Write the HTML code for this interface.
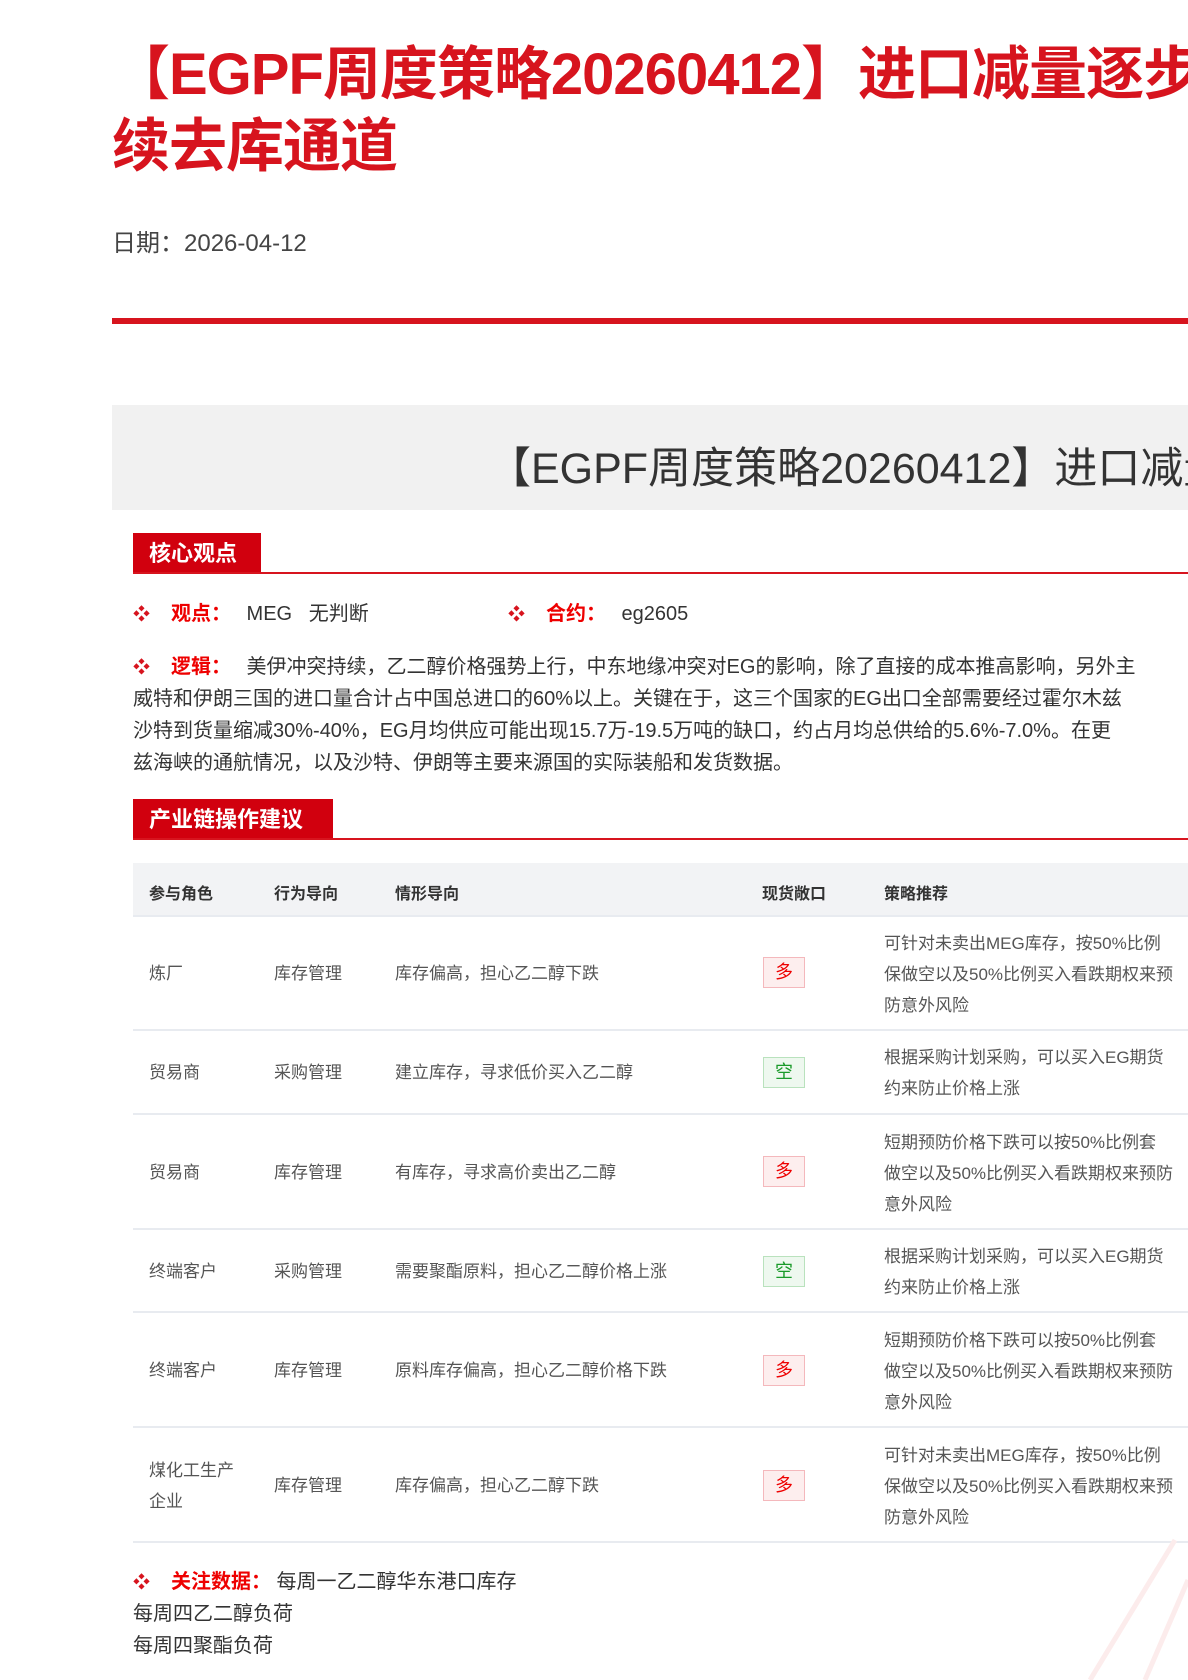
<!DOCTYPE html>
<html><head><meta charset="utf-8"><style>
*{margin:0;padding:0;box-sizing:border-box}
html,body{width:1188px;height:1680px;overflow:hidden;background:#fff}
body{position:relative;font-family:"Liberation Sans","Noto Sans CJK SC",sans-serif;color:#333}
.a{position:absolute;white-space:nowrap}
.wrap{position:absolute;left:0;top:0;width:1188px;height:1680px;overflow:hidden}
.t{font-size:58px;font-weight:bold;color:#d7141e;line-height:70px;letter-spacing:-1px}
.tag{position:absolute;background:#d1000e;color:#fff;font-size:22px;font-weight:bold;line-height:41px;padding-left:16px}
.hl{position:absolute;left:133px;right:0;height:2px;background:#d7141e}
.b{color:#d7141e;font-size:17px;display:inline-block;width:38px}
.lab{color:#e00;font-weight:bold;display:inline-block;width:70px}
.p{font-size:20px;line-height:32px}
.th{font-size:16px;font-weight:bold;color:#333}
.td{font-size:17px;color:#555;line-height:31px}
.rl{position:absolute;left:133px;right:0;height:2px;background:#e8ebf0}
.dd{position:absolute;left:763px;width:42px;height:31px;border:1px solid #f4b8bc;background:#fdeeee;color:#e00;font-size:18px;text-align:center;line-height:29px}
.kk{border-color:#b9e2bd;background:#eef8ef;color:#1a9a2a}
</style></head><body><div class="wrap">
<div class="a t" style="left:112px;top:40px">【EGPF周度策略20260412】进口减量逐步兑现</div>
<div class="a t" style="left:112px;top:112px">续去库通道</div>
<div class="a" style="left:112px;top:223px;font-size:24px;color:#444">日期：2026-04-12</div>
<div class="a" style="left:112px;top:318px;width:1076px;height:6px;background:#d7141e"></div>
<div class="a" style="left:112px;top:405px;width:1076px;height:105px;background:#f1f1f1"></div>
<div class="a" style="left:488px;top:434px;font-size:43px;color:#333">【EGPF周度策略20260412】进口减量逐步</div>

<div class="tag" style="left:133px;top:533px;width:128px">核心观点</div>
<div class="hl" style="top:572px"></div>
<div class="a p" style="left:133px;top:598px"><span class="b">❖</span><span class="lab">观点：</span>&nbsp;MEG&nbsp;&nbsp;&nbsp;无判断</div>
<div class="a p" style="left:508px;top:598px"><span class="b">❖</span><span class="lab">合约：</span>&nbsp;eg2605</div>
<div class="a p" style="left:133px;top:651px"><span class="b">❖</span><span class="lab">逻辑：</span>&nbsp;美伊冲突持续，乙二醇价格强势上行，中东地缘冲突对EG的影响，除了直接的成本推高影响，另外主</div>
<div class="a p" style="left:133px;top:683px">威特和伊朗三国的进口量合计占中国总进口的60%以上。关键在于，这三个国家的EG出口全部需要经过霍尔木兹</div>
<div class="a p" style="left:133px;top:715px">沙特到货量缩减30%-40%，EG月均供应可能出现15.7万-19.5万吨的缺口，约占月均总供给的5.6%-7.0%。在更</div>
<div class="a p" style="left:133px;top:747px">兹海峡的通航情况，以及沙特、伊朗等主要来源国的实际装船和发货数据。</div>

<div class="tag" style="left:133px;top:799px;width:200px">产业链操作建议</div>
<div class="hl" style="top:838px"></div>

<div class="a" style="left:133px;top:863px;width:1055px;height:54px;background:#f2f3f5;border-bottom:2px solid #e8ebf0"></div>
<div class="a th" style="left:149px;top:880px">参与角色</div>
<div class="a th" style="left:274px;top:880px">行为导向</div>
<div class="a th" style="left:395px;top:880px">情形导向</div>
<div class="a th" style="left:762px;top:880px">现货敞口</div>
<div class="a th" style="left:884px;top:880px">策略推荐</div>

<div class="a td" style="left:149px;top:958px">炼厂</div>
<div class="a td" style="left:274px;top:958px">库存管理</div>
<div class="a td" style="left:395px;top:958px">库存偏高，担心乙二醇下跌</div>
<div class="dd" style="top:957px">多</div>
<div class="a td" style="left:884px;top:928px">可针对未卖出MEG库存，按50%比例<br>保做空以及50%比例买入看跌期权来预<br>防意外风险</div>
<div class="rl" style="top:1029px"></div>

<div class="a td" style="left:149px;top:1057px">贸易商</div>
<div class="a td" style="left:274px;top:1057px">采购管理</div>
<div class="a td" style="left:395px;top:1057px">建立库存，寻求低价买入乙二醇</div>
<div class="dd kk" style="top:1057px">空</div>
<div class="a td" style="left:884px;top:1042px">根据采购计划采购，可以买入EG期货<br>约来防止价格上涨</div>
<div class="rl" style="top:1113px"></div>

<div class="a td" style="left:149px;top:1157px">贸易商</div>
<div class="a td" style="left:274px;top:1157px">库存管理</div>
<div class="a td" style="left:395px;top:1157px">有库存，寻求高价卖出乙二醇</div>
<div class="dd" style="top:1156px">多</div>
<div class="a td" style="left:884px;top:1127px">短期预防价格下跌可以按50%比例套<br>做空以及50%比例买入看跌期权来预防<br>意外风险</div>
<div class="rl" style="top:1228px"></div>

<div class="a td" style="left:149px;top:1256px">终端客户</div>
<div class="a td" style="left:274px;top:1256px">采购管理</div>
<div class="a td" style="left:395px;top:1256px">需要聚酯原料，担心乙二醇价格上涨</div>
<div class="dd kk" style="top:1256px">空</div>
<div class="a td" style="left:884px;top:1241px">根据采购计划采购，可以买入EG期货<br>约来防止价格上涨</div>
<div class="rl" style="top:1311px"></div>

<div class="a td" style="left:149px;top:1355px">终端客户</div>
<div class="a td" style="left:274px;top:1355px">库存管理</div>
<div class="a td" style="left:395px;top:1355px">原料库存偏高，担心乙二醇价格下跌</div>
<div class="dd" style="top:1355px">多</div>
<div class="a td" style="left:884px;top:1325px">短期预防价格下跌可以按50%比例套<br>做空以及50%比例买入看跌期权来预防<br>意外风险</div>
<div class="rl" style="top:1426px"></div>

<div class="a td" style="left:149px;top:1455px">煤化工生产<br>企业</div>
<div class="a td" style="left:274px;top:1470px">库存管理</div>
<div class="a td" style="left:395px;top:1470px">库存偏高，担心乙二醇下跌</div>
<div class="dd" style="top:1470px">多</div>
<div class="a td" style="left:884px;top:1440px">可针对未卖出MEG库存，按50%比例<br>保做空以及50%比例买入看跌期权来预<br>防意外风险</div>
<div class="rl" style="top:1541px"></div>

<div class="a p" style="left:133px;top:1566px"><span class="b">❖</span><span class="lab" style="width:auto">关注数据：</span>&nbsp;每周一乙二醇华东港口库存</div>
<div class="a p" style="left:133px;top:1598px">每周四乙二醇负荷</div>
<div class="a p" style="left:133px;top:1630px">每周四聚酯负荷</div>

<svg class="a" style="left:960px;top:1520px" width="228" height="160"><path d="M215 20 L130 160 M228 60 L185 160" stroke="#fcecec" stroke-width="5" fill="none"/></svg>
</div></body></html>
